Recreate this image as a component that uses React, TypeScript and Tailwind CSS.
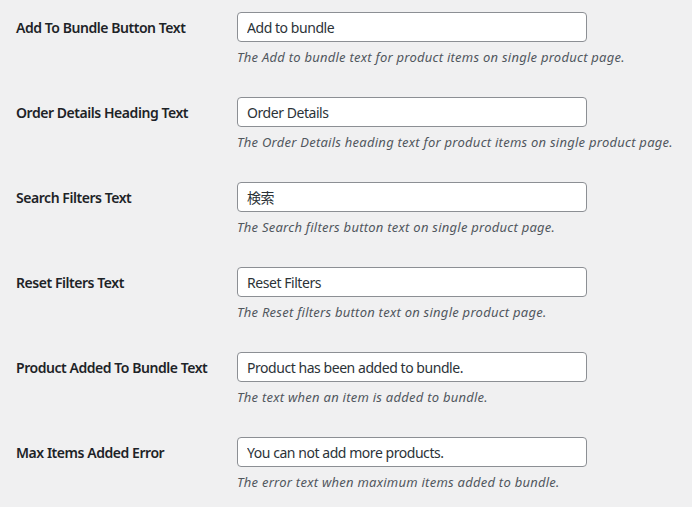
const rows = [
  {
    label: 'Add To Bundle Button Text',
    value: 'Add to bundle',
    help: 'The Add to bundle text for product items on single product page.',
  },
  {
    label: 'Order Details Heading Text',
    value: 'Order Details',
    help: 'The Order Details heading text for product items on single product page.',
  },
  {
    label: 'Search Filters Text',
    value: '検索',
    help: 'The Search filters button text on single product page.',
  },
  {
    label: 'Reset Filters Text',
    value: 'Reset Filters',
    help: 'The Reset filters button text on single product page.',
  },
  {
    label: 'Product Added To Bundle Text',
    value: 'Product has been added to bundle.',
    help: 'The text when an item is added to bundle.',
  },
  {
    label: 'Max Items Added Error',
    value: 'You can not add more products.',
    help: 'The error text when maximum items added to bundle.',
  },
]

export default function App() {
  return (
    <div
      className="w-[692px] h-[507px] overflow-hidden bg-[#f0f0f1] pt-[12px] pl-[16px] text-[#1d2327]"
      style={{ fontFamily: '"Noto Sans", "Noto Sans CJK JP", sans-serif' }}
    >
      {rows.map(row => (
        <div key={row.label} className="flex h-[85px]">
          <div className="w-[221px] shrink-0 h-[30px] flex items-center text-[14px] font-semibold tracking-[-0.45px]">
            {row.label}
          </div>
          <div className="flex flex-col">
            <input
              type="text"
              defaultValue={row.value}
              className="w-[350px] h-[30px] px-[9px] bg-white border border-[#8c8f94] rounded-[4px] text-[14px] tracking-[-0.45px] text-[#2c3338] outline-none"
            />
            <p className="mt-[6px] text-[13px] italic text-[#50575e] leading-[19px] tracking-[0.25px] whitespace-nowrap">
              {row.help}
            </p>
          </div>
        </div>
      ))}
    </div>
  )
}
